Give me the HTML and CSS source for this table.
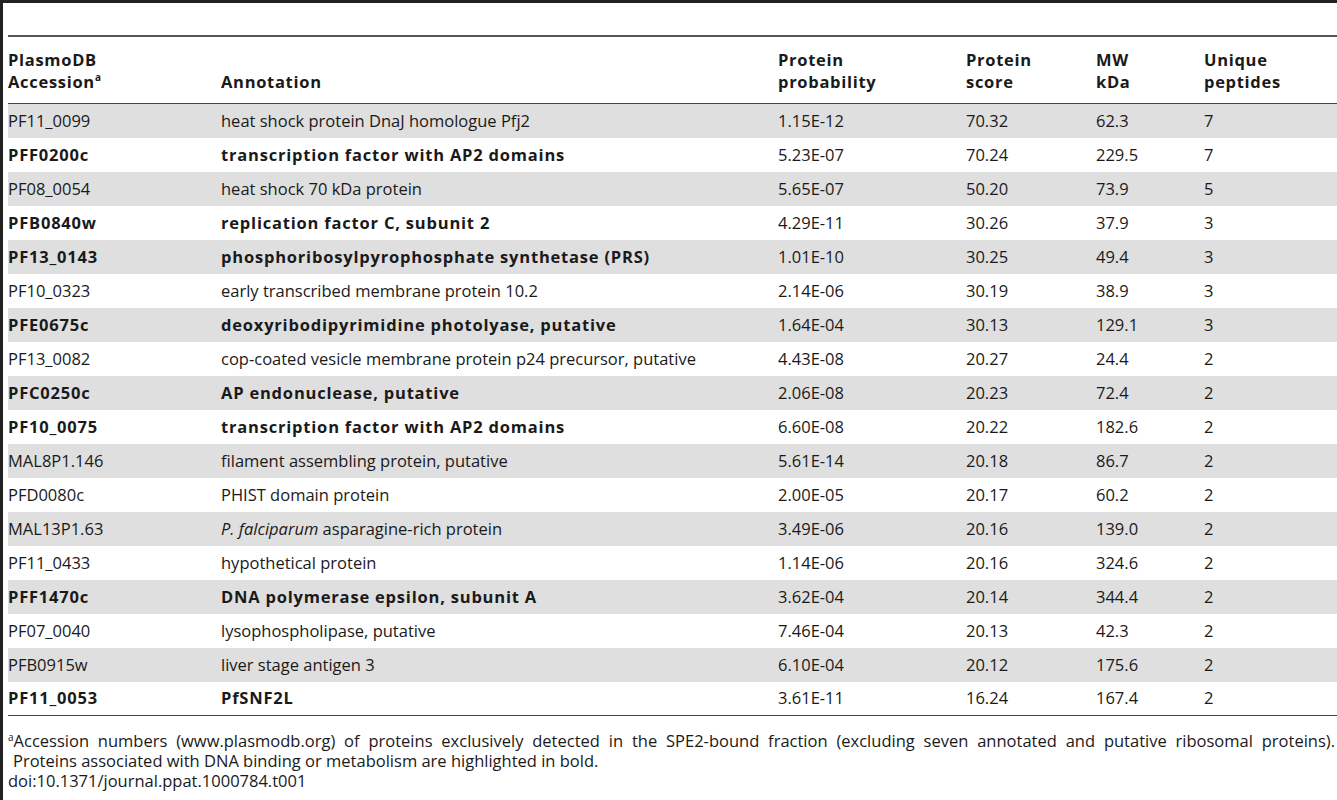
FILE: index.html
```html
<!DOCTYPE html>
<html lang="en">
<head>
    <meta charset="UTF-8">
    <title>Table 1. Proteins detected in the SPE2-bound fraction</title>
    <link rel="stylesheet" href="styles.css">
</head>
<body>

<div class="table-frame">
    <table class="data-table">
        <colgroup>
            <col class="col-acc">
            <col class="col-ann">
            <col class="col-prob">
            <col class="col-score">
            <col class="col-mw">
            <col class="col-pep">
        </colgroup>
        <thead>
            <tr>
                <th>PlasmoDB<br>Accession<sup>a</sup></th>
                <th>Annotation</th>
                <th>Protein<br>probability</th>
                <th>Protein<br>score</th>
                <th>MW<br>kDa</th>
                <th>Unique<br>peptides</th>
            </tr>
        </thead>
        <tbody>
            <tr><td>PF11_0099</td><td>heat shock protein DnaJ homologue Pfj2</td><td>1.15E-12</td><td>70.32</td><td>62.3</td><td>7</td></tr>
            <tr class="bold"><td>PFF0200c</td><td>transcription factor with AP2 domains</td><td>5.23E-07</td><td>70.24</td><td>229.5</td><td>7</td></tr>
            <tr><td>PF08_0054</td><td>heat shock 70 kDa protein</td><td>5.65E-07</td><td>50.20</td><td>73.9</td><td>5</td></tr>
            <tr class="bold"><td>PFB0840w</td><td>replication factor C, subunit 2</td><td>4.29E-11</td><td>30.26</td><td>37.9</td><td>3</td></tr>
            <tr class="bold"><td>PF13_0143</td><td>phosphoribosylpyrophosphate synthetase (PRS)</td><td>1.01E-10</td><td>30.25</td><td>49.4</td><td>3</td></tr>
            <tr><td>PF10_0323</td><td>early transcribed membrane protein 10.2</td><td>2.14E-06</td><td>30.19</td><td>38.9</td><td>3</td></tr>
            <tr class="bold"><td>PFE0675c</td><td>deoxyribodipyrimidine photolyase, putative</td><td>1.64E-04</td><td>30.13</td><td>129.1</td><td>3</td></tr>
            <tr><td>PF13_0082</td><td>cop-coated vesicle membrane protein p24 precursor, putative</td><td>4.43E-08</td><td>20.27</td><td>24.4</td><td>2</td></tr>
            <tr class="bold"><td>PFC0250c</td><td>AP endonuclease, putative</td><td>2.06E-08</td><td>20.23</td><td>72.4</td><td>2</td></tr>
            <tr class="bold"><td>PF10_0075</td><td>transcription factor with AP2 domains</td><td>6.60E-08</td><td>20.22</td><td>182.6</td><td>2</td></tr>
            <tr><td>MAL8P1.146</td><td>filament assembling protein, putative</td><td>5.61E-14</td><td>20.18</td><td>86.7</td><td>2</td></tr>
            <tr><td>PFD0080c</td><td>PHIST domain protein</td><td>2.00E-05</td><td>20.17</td><td>60.2</td><td>2</td></tr>
            <tr><td>MAL13P1.63</td><td><i>P. falciparum</i> asparagine-rich protein</td><td>3.49E-06</td><td>20.16</td><td>139.0</td><td>2</td></tr>
            <tr><td>PF11_0433</td><td>hypothetical protein</td><td>1.14E-06</td><td>20.16</td><td>324.6</td><td>2</td></tr>
            <tr class="bold"><td>PFF1470c</td><td>DNA polymerase epsilon, subunit A</td><td>3.62E-04</td><td>20.14</td><td>344.4</td><td>2</td></tr>
            <tr><td>PF07_0040</td><td>lysophospholipase, putative</td><td>7.46E-04</td><td>20.13</td><td>42.3</td><td>2</td></tr>
            <tr><td>PFB0915w</td><td>liver stage antigen 3</td><td>6.10E-04</td><td>20.12</td><td>175.6</td><td>2</td></tr>
            <tr class="bold"><td>PF11_0053</td><td>PfSNF2L</td><td>3.61E-11</td><td>16.24</td><td>167.4</td><td>2</td></tr>
        </tbody>
    </table>

    <div class="footnote">
        <p class="justified"><sup>a</sup>Accession numbers (www.plasmodb.org) of proteins exclusively detected in the SPE2-bound fraction (excluding seven annotated and putative ribosomal proteins).</p>
        <p class="indent">Proteins associated with DNA binding or metabolism are highlighted in bold.</p>
        <p>doi:10.1371/journal.ppat.1000784.t001</p>
    </div>
</div>

</body>
</html>
```

FILE: styles.css
```css
body {
    margin: 0;
    background-color: white;
    font-family: "Open Sans", "Liberation Sans", sans-serif;
    color: #1a1a1a;
    overflow: hidden;
}

.table-frame {
    border-left: 3px solid #222;
    border-top: 3px solid #222;
    padding: 32px 0 0 5px;
    height: 800px;
    box-sizing: border-box;
}

.data-table {
    width: 100%;
    border-collapse: collapse;
    table-layout: fixed;
    font-size: 16.5px;
}

.col-acc { width: 213px; }
.col-ann { width: 557px; }
.col-prob { width: 188px; }
.col-score { width: 130px; }
.col-mw { width: 108px; }

.data-table thead tr {
    border-top: 2px solid #555;
    border-bottom: 1px solid #444;
}

.data-table th {
    text-align: left;
    vertical-align: bottom;
    font-weight: bold;
    letter-spacing: 0.7px;
    line-height: 22px;
    padding: 12px 0 10px 0;
}

.data-table th sup {
    font-size: 10px;
    line-height: 0;
    letter-spacing: 0;
    vertical-align: 7px;
}

.data-table td {
    height: 34px;
    padding: 0;
    line-height: 20px;
    white-space: nowrap;
    box-sizing: border-box;
}

.data-table tbody tr:nth-child(odd) {
    background-color: #dfdfdf;
}

.data-table tbody tr:last-child {
    border-bottom: 1px solid #444;
}

/* only accession and annotation are bold */
.bold td:nth-child(-n+2) {
    font-weight: bold;
    letter-spacing: 0.8px;
}

.footnote {
    margin-top: 15px;
    font-size: 16.5px;
    line-height: 20px;
}

.footnote p {
    margin: 0;
    white-space: nowrap;
}

.footnote .justified {
    white-space: normal;
    text-align: justify;
    text-align-last: justify;
    padding-right: 2px;
}

.footnote sup {
    font-size: 10px;
    line-height: 0;
    vertical-align: 6px;
}

.indent {
    padding-left: 5px;
}
```
